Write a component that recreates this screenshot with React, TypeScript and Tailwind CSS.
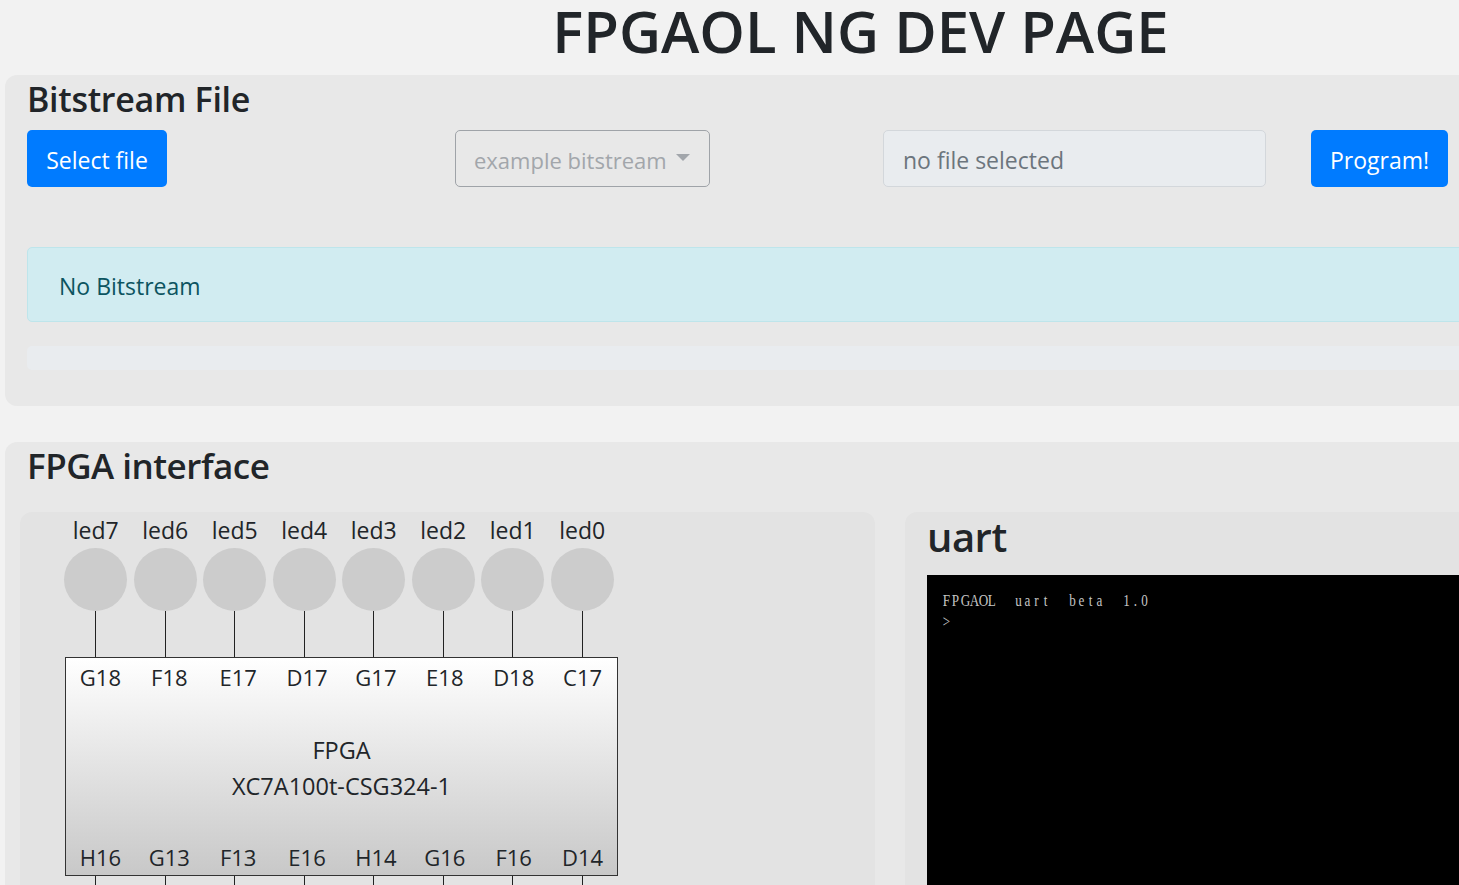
import React from "react";

const leds = ["led7", "led6", "led5", "led4", "led3", "led2", "led1", "led0"];
const topPins = ["G18", "F18", "E17", "D17", "G17", "E18", "D18", "C17"];
const botPins = ["H16", "G13", "F13", "E16", "H14", "G16", "F16", "D14"];

function Mono({ text }: { text: string }) {
  return (
    <div className="flex">
      {text.split("").map((c, i) => (
        <span key={i} className="inline-block w-[9px] scale-x-[0.82] text-center">
          {c === " " ? "\u00a0" : c}
        </span>
      ))}
    </div>
  );
}

export default function App() {
  return (
    <div className="w-[1459px] h-[885px] overflow-hidden bg-[#f2f2f2] text-[#212529]" style={{ fontFamily: '"Open Sans", "Noto Sans", sans-serif' }}>
      <div className="w-[1780px]">
        <div className="h-[75px] w-[1459px] pl-[262px] pt-[1px]">
          <h1 className="text-center text-[58px] font-semibold leading-[60px]">FPGAOL NG DEV PAGE</h1>
        </div>

        <div className="ml-[5px] w-[1760px] rounded-[12px] bg-[#e8e8e8] pl-[22px] pb-[36px]">
          <h2 className="text-[34px] font-semibold leading-[48px] tracking-[-0.3px]">Bitstream File</h2>
          <div className="mt-[7px] grid grid-cols-[428px_428px_428px_428px]">
            <div>
              <button className="h-[57px] w-[140px] rounded-[5px] bg-[#007bff] pt-[3px] text-[23px] text-white">Select file</button>
            </div>
            <div>
              <div className="flex h-[57px] w-[255px] items-center rounded-[5px] border border-[#9fa3a8] pl-[18px] pt-[3px] text-[22px] text-[#a2a6ab]">
                <span>example bitstream</span>
                <span className="ml-[9px] mt-[-6px] h-0 w-0 border-x-[7px] border-t-[7px] border-x-transparent border-t-[#a2a6ab]" />
              </div>
            </div>
            <div>
              <div className="flex h-[57px] w-[383px] items-center rounded-[5px] border border-[#d3d7db] bg-[#e9ecef] pl-[19px] pt-[3px] text-[23px] text-[#6c757d]">no file selected</div>
            </div>
            <div>
              <button className="h-[57px] w-[137px] rounded-[5px] bg-[#007bff] pt-[3px] text-[23px] text-white">Program!</button>
            </div>
          </div>
          <div className="mt-[60px] flex h-[75px] items-center rounded-[5px] border border-[#bee5eb] bg-[#d1ecf1] pl-[31px] pt-[3px] text-[23px] text-[#0c5460]">No Bitstream</div>
          <div className="mt-[24px] h-[24px] rounded-[5px] bg-[#e9ecef]" />
        </div>

        <div className="ml-[5px] mt-[36px] w-[1770px] rounded-[12px] bg-[#e8e8e8] pb-[40px]">
          <h2 className="pl-[22px] text-[35px] font-semibold leading-[48px] tracking-[-0.5px]">FPGA interface</h2>
          <div className="mt-[22px] flex gap-[30px] px-[15px]">
            <div className="h-[420px] w-[855px] rounded-[12px] bg-[#e3e3e3] pl-[41px]">
              <div className="grid w-[556px] grid-cols-8 text-center text-[23px] leading-[36px]">
                {leds.map((l) => (
                  <div key={l}>{l}</div>
                ))}
              </div>
              <div className="grid w-[556px] grid-cols-8">
                {leds.map((l) => (
                  <div key={l} className="flex flex-col items-center">
                    <div className="h-[63px] w-[63px] rounded-full bg-[#cccccc]" />
                    <div className="h-[46px] w-px bg-[#222]" />
                  </div>
                ))}
              </div>
              <div className="ml-[4px] flex h-[219px] w-[553px] flex-col border border-[#333] bg-gradient-to-b from-white to-[#c8c8c8] text-[22px]">
                <div className="grid grid-cols-8 pt-[3px] text-center leading-[32px]">
                  {topPins.map((p) => (
                    <div key={p}>{p}</div>
                  ))}
                </div>
                <div className="mt-[39px] text-center text-[23.5px] leading-[36px]">
                  <div>FPGA</div>
                  <div>XC7A100t-CSG324-1</div>
                </div>
                <div className="mt-auto grid grid-cols-8 pb-[2px] text-center leading-[32px]">
                  {botPins.map((p) => (
                    <div key={p}>{p}</div>
                  ))}
                </div>
              </div>
              <div className="grid w-[556px] grid-cols-8">
                {leds.map((l) => (
                  <div key={l} className="flex justify-center">
                    <div className="h-[30px] w-px bg-[#222]" />
                  </div>
                ))}
              </div>
            </div>
            <div className="h-[420px] w-[855px] rounded-[12px] bg-[#e3e3e3] pl-[22px]">
              <h1 className="text-[40px] font-semibold leading-[50px] tracking-[-0.5px]">uart</h1>
              <div className="mt-[13px] h-[320px] bg-black pl-[15px] pt-[15px] text-[16px] leading-[21px] text-[#c4c4c4]" style={{ fontFamily: '"Liberation Serif", serif' }}>
                <Mono text="FPGAOL  uart  beta  1.0" />
                <Mono text=">" />
              </div>
            </div>
          </div>
        </div>
      </div>
    </div>
  );
}
